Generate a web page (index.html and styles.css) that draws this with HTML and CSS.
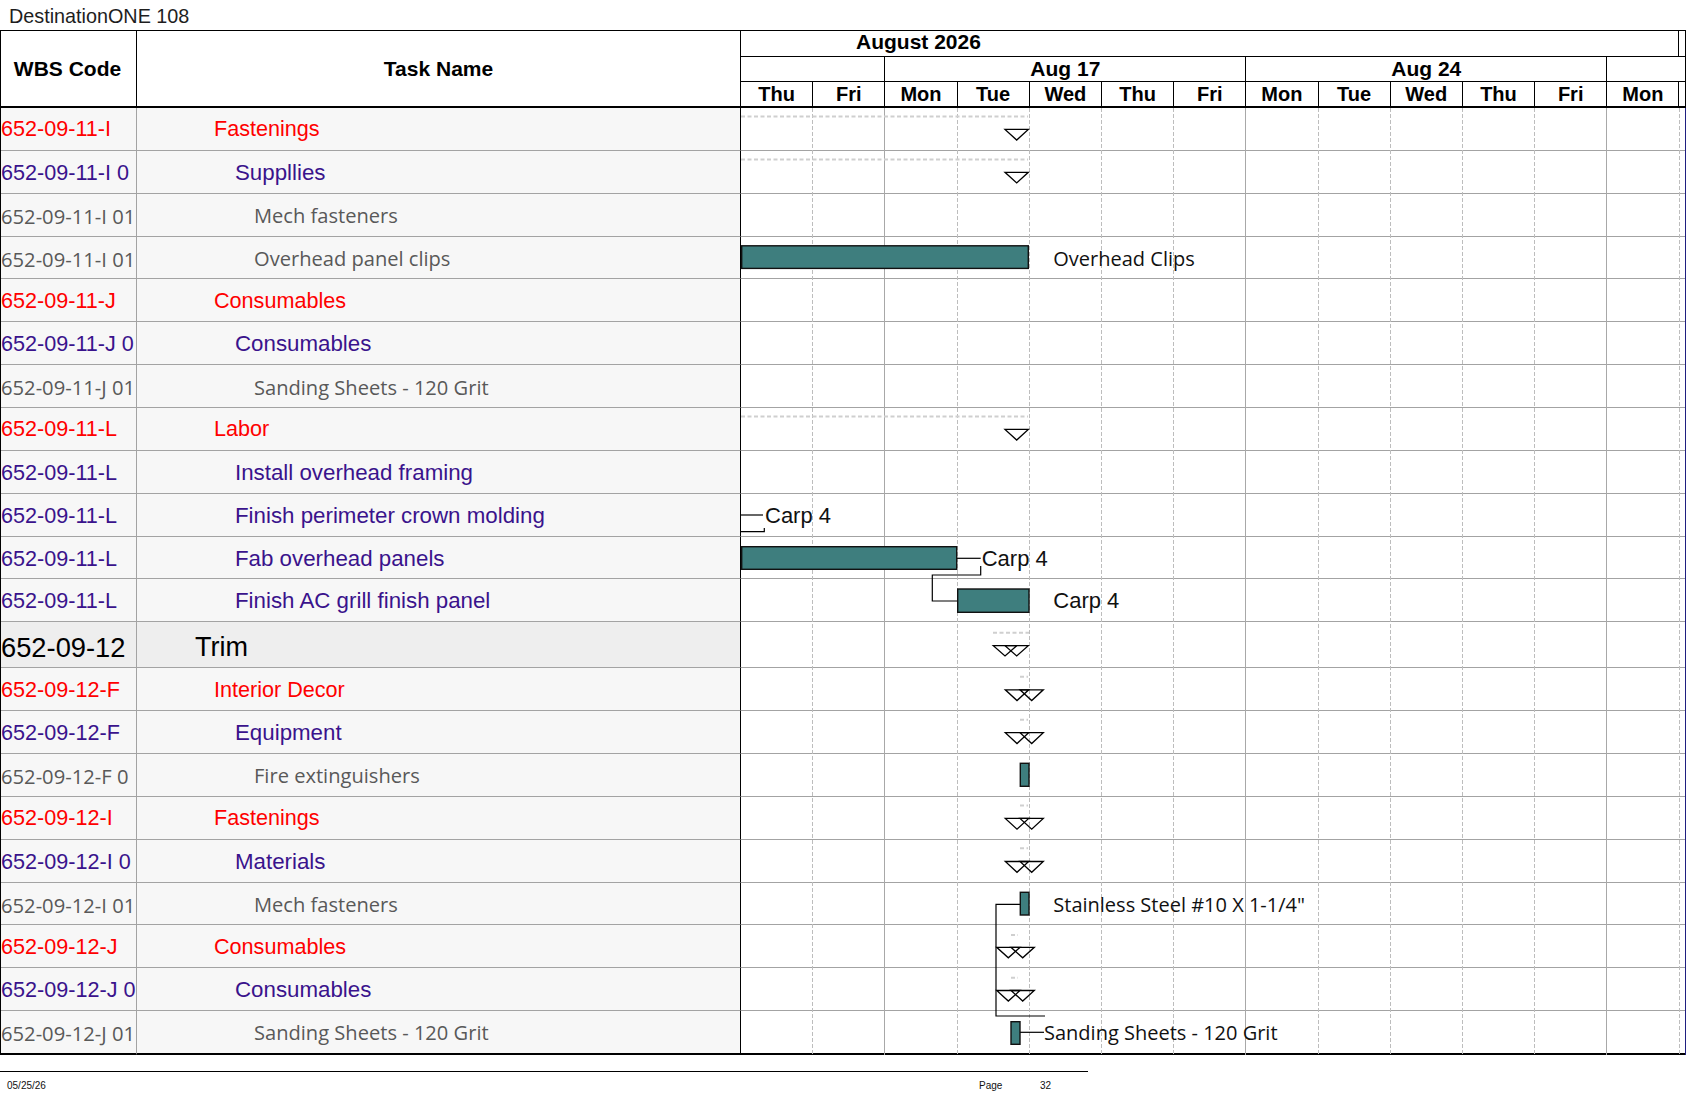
FILE: index.html
```html
<!DOCTYPE html>
<html>
<head>
<meta charset="utf-8">
<title>DestinationONE 108</title>
<link rel="stylesheet" href="styles.css">
</head>
<body>
<div class="title">DestinationONE 108</div>
<div class="sheet">
  <div class="head">
    <div class="h-col h-wbs">WBS Code</div>
    <div class="h-col h-task">Task Name</div>
    <div class="h-time">
      <div class="scale months">
        <div class="month">August 2026</div>
        <div></div>
      </div>
      <div class="scale weeks">
        <div class="week w2"></div>
        <div class="week w5">Aug 17</div>
        <div class="week w5">Aug 24</div>
        <div class="wlast"></div>
      </div>
      <div class="scale days">
        <div class="day">Thu</div><div class="day">Fri</div><div class="day">Mon</div><div class="day">Tue</div><div class="day">Wed</div><div class="day">Thu</div><div class="day">Fri</div><div class="day">Mon</div><div class="day">Tue</div><div class="day">Wed</div><div class="day">Thu</div><div class="day">Fri</div><div class="day">Mon</div><div></div>
      </div>
    </div>
  </div>
  <div class="body">
    <div class="row"><div class="wbs l2">652-09-11-I</div><div class="task l2">Fastenings</div><div class="gc"></div></div>
    <div class="row"><div class="wbs l3">652-09-11-I 0</div><div class="task l3">Suppllies</div><div class="gc"></div></div>
    <div class="row"><div class="wbs l4">652-09-11-I 01</div><div class="task l4">Mech fasteners</div><div class="gc"></div></div>
    <div class="row"><div class="wbs l4">652-09-11-I 01</div><div class="task l4">Overhead panel clips</div><div class="gc"></div></div>
    <div class="row"><div class="wbs l2">652-09-11-J</div><div class="task l2">Consumables</div><div class="gc"></div></div>
    <div class="row"><div class="wbs l3">652-09-11-J 0</div><div class="task l3">Consumables</div><div class="gc"></div></div>
    <div class="row"><div class="wbs l4">652-09-11-J 01</div><div class="task l4">Sanding Sheets - 120 Grit</div><div class="gc"></div></div>
    <div class="row"><div class="wbs l2">652-09-11-L</div><div class="task l2">Labor</div><div class="gc"></div></div>
    <div class="row"><div class="wbs l3">652-09-11-L</div><div class="task l3">Install overhead framing</div><div class="gc"></div></div>
    <div class="row"><div class="wbs l3">652-09-11-L</div><div class="task l3">Finish perimeter crown molding</div><div class="gc"></div></div>
    <div class="row"><div class="wbs l3">652-09-11-L</div><div class="task l3">Fab overhead panels</div><div class="gc"></div></div>
    <div class="row"><div class="wbs l3">652-09-11-L</div><div class="task l3">Finish AC grill finish panel</div><div class="gc"></div></div>
    <div class="row trim"><div class="wbs l1">652-09-12</div><div class="task l1">Trim</div><div class="gc"></div></div>
    <div class="row"><div class="wbs l2">652-09-12-F</div><div class="task l2">Interior Decor</div><div class="gc"></div></div>
    <div class="row"><div class="wbs l3">652-09-12-F</div><div class="task l3">Equipment</div><div class="gc"></div></div>
    <div class="row"><div class="wbs l4">652-09-12-F 0</div><div class="task l4">Fire extinguishers</div><div class="gc"></div></div>
    <div class="row"><div class="wbs l2">652-09-12-I</div><div class="task l2">Fastenings</div><div class="gc"></div></div>
    <div class="row"><div class="wbs l3">652-09-12-I 0</div><div class="task l3">Materials</div><div class="gc"></div></div>
    <div class="row"><div class="wbs l4">652-09-12-I 01</div><div class="task l4">Mech fasteners</div><div class="gc"></div></div>
    <div class="row"><div class="wbs l2">652-09-12-J</div><div class="task l2">Consumables</div><div class="gc"></div></div>
    <div class="row"><div class="wbs l3">652-09-12-J 0</div><div class="task l3">Consumables</div><div class="gc"></div></div>
    <div class="row last"><div class="wbs l4">652-09-12-J 01</div><div class="task l4">Sanding Sheets - 120 Grit</div><div class="gc"></div></div>

    <svg class="chart" width="944" height="947" viewBox="0 0 944 947" xmlns="http://www.w3.org/2000/svg">
      <g class="vd">
        <line x1="71.5" y1="0" x2="71.5" y2="947"/>
        <line x1="216.5" y1="0" x2="216.5" y2="947"/>
        <line x1="288.5" y1="0" x2="288.5" y2="947"/>
        <line x1="360.5" y1="0" x2="360.5" y2="947"/>
        <line x1="432.5" y1="0" x2="432.5" y2="947"/>
        <line x1="577.5" y1="0" x2="577.5" y2="947"/>
        <line x1="649.5" y1="0" x2="649.5" y2="947"/>
        <line x1="721.5" y1="0" x2="721.5" y2="947"/>
        <line x1="793.5" y1="0" x2="793.5" y2="947"/>
        <line x1="938.5" y1="0" x2="938.5" y2="947"/>
      </g>
      <g class="vs">
        <line x1="143.5" y1="0" x2="143.5" y2="947"/>
        <line x1="504.5" y1="0" x2="504.5" y2="947"/>
        <line x1="865.5" y1="0" x2="865.5" y2="947"/>
      </g>

      <g class="sum">
        <line x1="0" y1="8.5" x2="287" y2="8.5"/>
        <line x1="0" y1="51.5" x2="287" y2="51.5"/>
        <line x1="0" y1="308.5" x2="287" y2="308.5"/>
        <line x1="252" y1="524.7" x2="288" y2="524.7"/>
        <line x1="279" y1="568.8" x2="287" y2="568.8"/>
        <line x1="279" y1="611.7" x2="287" y2="611.7"/>
        <line x1="279" y1="697.4" x2="287" y2="697.4"/>
        <line x1="279" y1="740.2" x2="287" y2="740.2"/>
        <line x1="270" y1="827" x2="277" y2="827"/>
        <line x1="270" y1="869.8" x2="277" y2="869.8"/>
      </g>

      <g class="tri">
        <polygon points="264,21.4 287.3,21.4 275.7,32"/>
        <polygon points="264,64.3 287.3,64.3 275.7,74.9"/>
        <polygon points="264,321.4 287.3,321.4 275.7,332"/>
        <polygon points="252.3,537.7 275.7,537.7 264,548"/>
        <polygon points="264,537.7 287.3,537.7 275.7,548"/>
        <polygon points="264.3,581.8 287.7,581.8 276,592.6"/>
        <polygon points="279,581.8 302.3,581.8 290.7,592.6"/>
        <polygon points="264.3,624.7 287.7,624.7 276,635.5"/>
        <polygon points="279,624.7 302.3,624.7 290.7,635.5"/>
        <polygon points="264.3,710.4 287.7,710.4 276,721.2"/>
        <polygon points="279,710.4 302.3,710.4 290.7,721.2"/>
        <polygon points="264.3,753.5 287.7,753.5 276,764.3"/>
        <polygon points="279,753.5 302.3,753.5 290.7,764.3"/>
        <polygon points="255.7,839.3 279,839.3 267.3,849.8"/>
        <polygon points="270,839.3 293.3,839.3 281.7,849.8"/>
        <polygon points="255.7,882.5 279,882.5 267.3,893"/>
        <polygon points="270,882.5 293.3,882.5 281.7,893"/>
      </g>

      <g class="link">
        <path d="M0 407 H22"/>
        <path d="M0 423.7 H23.3 V420"/>
        <path d="M215.7 450.3 H239.7"/>
        <path d="M239.7 458 V467 H191.3 V493 H216.7"/>
        <path d="M279.3 796.3 H255 V908 H304"/>
        <path d="M279 924.3 H303"/>
      </g>

      <g class="bar">
        <rect x="0.7" y="137.8" width="286.6" height="22.6"/>
        <rect x="0.7" y="438.7" width="215" height="22.6"/>
        <rect x="216.7" y="481" width="71.3" height="23.3"/>
        <rect x="279.3" y="655.3" width="8.7" height="23"/>
        <rect x="279.3" y="784.3" width="8.7" height="22.7"/>
        <rect x="270" y="913.7" width="9" height="22.6"/>
      </g>

      <text class="lbl" x="312.3" y="157.7">Overhead Clips</text>
      <text class="lbl-a" x="24" y="414.7">Carp 4</text>
      <text class="lbl-a" x="240.7" y="458">Carp 4</text>
      <text class="lbl-a" x="312.3" y="500">Carp 4</text>
      <text class="lbl" x="312.3" y="803.7">Stainless Steel #10 X 1-1/4"</text>
      <text class="lbl" x="303" y="932">Sanding Sheets - 120 Grit</text>
    </svg>
  </div>
</div>
<div class="footer">
  <span>05/25/26</span>
  <span>Page</span>
  <span>32</span>
</div>
</body>
</html>
```

FILE: styles.css
```css
* { box-sizing: border-box; }

body {
  margin: 0;
  background: #fff;
  color: #000;
  font-family: "Liberation Sans", Arial, sans-serif;
}

.title {
  height: 30px;
  padding: 2px 0 0 9px;
  font-size: 19.8px;
  line-height: 28px;
  color: #1e1e1e;
}

.sheet {
  width: 1686px;
  border-left: 1px solid #000;
  border-top: 1px solid #000;
}

/* ---------- header ---------- */
.head {
  display: flex;
  height: 77px;
  border-bottom: 2px solid #000;
  border-right: 1px solid #000;
}

.h-col {
  display: flex;
  align-items: center;
  justify-content: center;
  font-weight: bold;
  font-size: 21px;
  border-right: 1px solid #000;
}

.h-wbs { width: 136px; padding-right: 2px; }
.h-task { width: 604px; }

.h-time {
  flex: 1;
  display: flex;
  flex-direction: column;
}

.scale {
  display: grid;
  grid-template-columns: repeat(13, 72.2px) 1fr;
  font-weight: bold;
}

.months {
  height: 26px;
  border-bottom: 1px solid #000;
  font-size: 21px;
  line-height: 21px;
}

.month {
  grid-column: span 13;
  border-right: 1px solid #000;
  padding-left: 115px;
}

.weeks {
  height: 25px;
  border-bottom: 1px solid #000;
  font-size: 21px;
  line-height: 23px;
  text-align: center;
}

.week { border-right: 1px solid #000; }
.w2 { grid-column: span 2; }
.w5 { grid-column: span 5; }
.wlast { grid-column: span 2; }

.days {
  height: 24px;
  font-size: 20px;
  line-height: 24px;
  text-align: center;
}

.day { border-right: 1px solid #000; }

/* ---------- body rows ---------- */
.body {
  position: relative;
  border-right: 1px solid #1f1f80;
}

.row {
  display: flex;
  height: 42.86px;
}

.row > div {
  border-bottom: 1px solid #a3a3a3;
}

.row.trim { height: 46px; }
.row.last { height: 43.5px; }
.row.last > div { border-bottom: 2px solid #000; }

.wbs {
  width: 136px;
  border-right: 1px solid #a3a3a3;
  background: #f7f7f7;
  white-space: nowrap;
  overflow: hidden;
  display: flex;
  align-items: center;
}

.task {
  width: 604px;
  border-right: 1px solid #000;
  background: #f7f7f7;
  white-space: nowrap;
  overflow: hidden;
  display: flex;
  align-items: center;
}

.gc { flex: 1; background: #fff; }

.trim .wbs,
.trim .task { background: #eeeeee; }

.wbs.l1 { font-size: 27.3px; color: #000; padding-top: 6px; }
.wbs.l2 { font-size: 21.6px; color: #f00; padding-top: 1px; }
.wbs.l3 { font-size: 21.6px; color: #3a138c; padding-top: 2px; }
.wbs.l4 { font-family: "Open Sans", sans-serif; font-size: 20.2px; color: #595959; padding-top: 2px; }

.task.l1 { font-size: 27px; color: #000; padding-left: 58px; padding-top: 6px; }
.task.l2 { font-size: 21.6px; color: #f00; padding-left: 77px; padding-top: 1px; }
.task.l3 { font-size: 22.3px; color: #3a138c; padding-left: 98px; padding-top: 2px; }
.task.l4 { font-family: "Open Sans", sans-serif; font-size: 20.1px; color: #595959; padding-left: 117px; padding-top: 2px; }

/* ---------- chart overlay ---------- */
.chart {
  position: absolute;
  left: 740px;
  top: 0;
}

.vd line { stroke: #bdbdbd; stroke-width: 1; stroke-dasharray: 4 2; }
.vs line { stroke: #a8a8a8; stroke-width: 1; }
.sum line { stroke: #cfcfcf; stroke-width: 2; stroke-dasharray: 4 2.5; }
.tri polygon { fill: none; stroke: #000; stroke-width: 1.3; }
.link path { fill: none; stroke: #000; stroke-width: 1.2; }
.bar rect { fill: #3e7e7e; stroke: #111; stroke-width: 1.4; }

.lbl {
  font-family: "Open Sans", sans-serif;
  font-size: 20px;
  fill: #111;
}

.lbl-a {
  font-family: "Liberation Sans", Arial, sans-serif;
  font-size: 22px;
  fill: #111;
}

/* ---------- footer ---------- */
.footer {
  width: 1088px;
  margin-top: 16px;
  border-top: 1px solid #000;
  padding: 8px 0 0 7px;
  display: grid;
  grid-template-columns: 972px 61px auto;
  font-size: 10px;
  line-height: 12px;
  color: #111;
}
```
